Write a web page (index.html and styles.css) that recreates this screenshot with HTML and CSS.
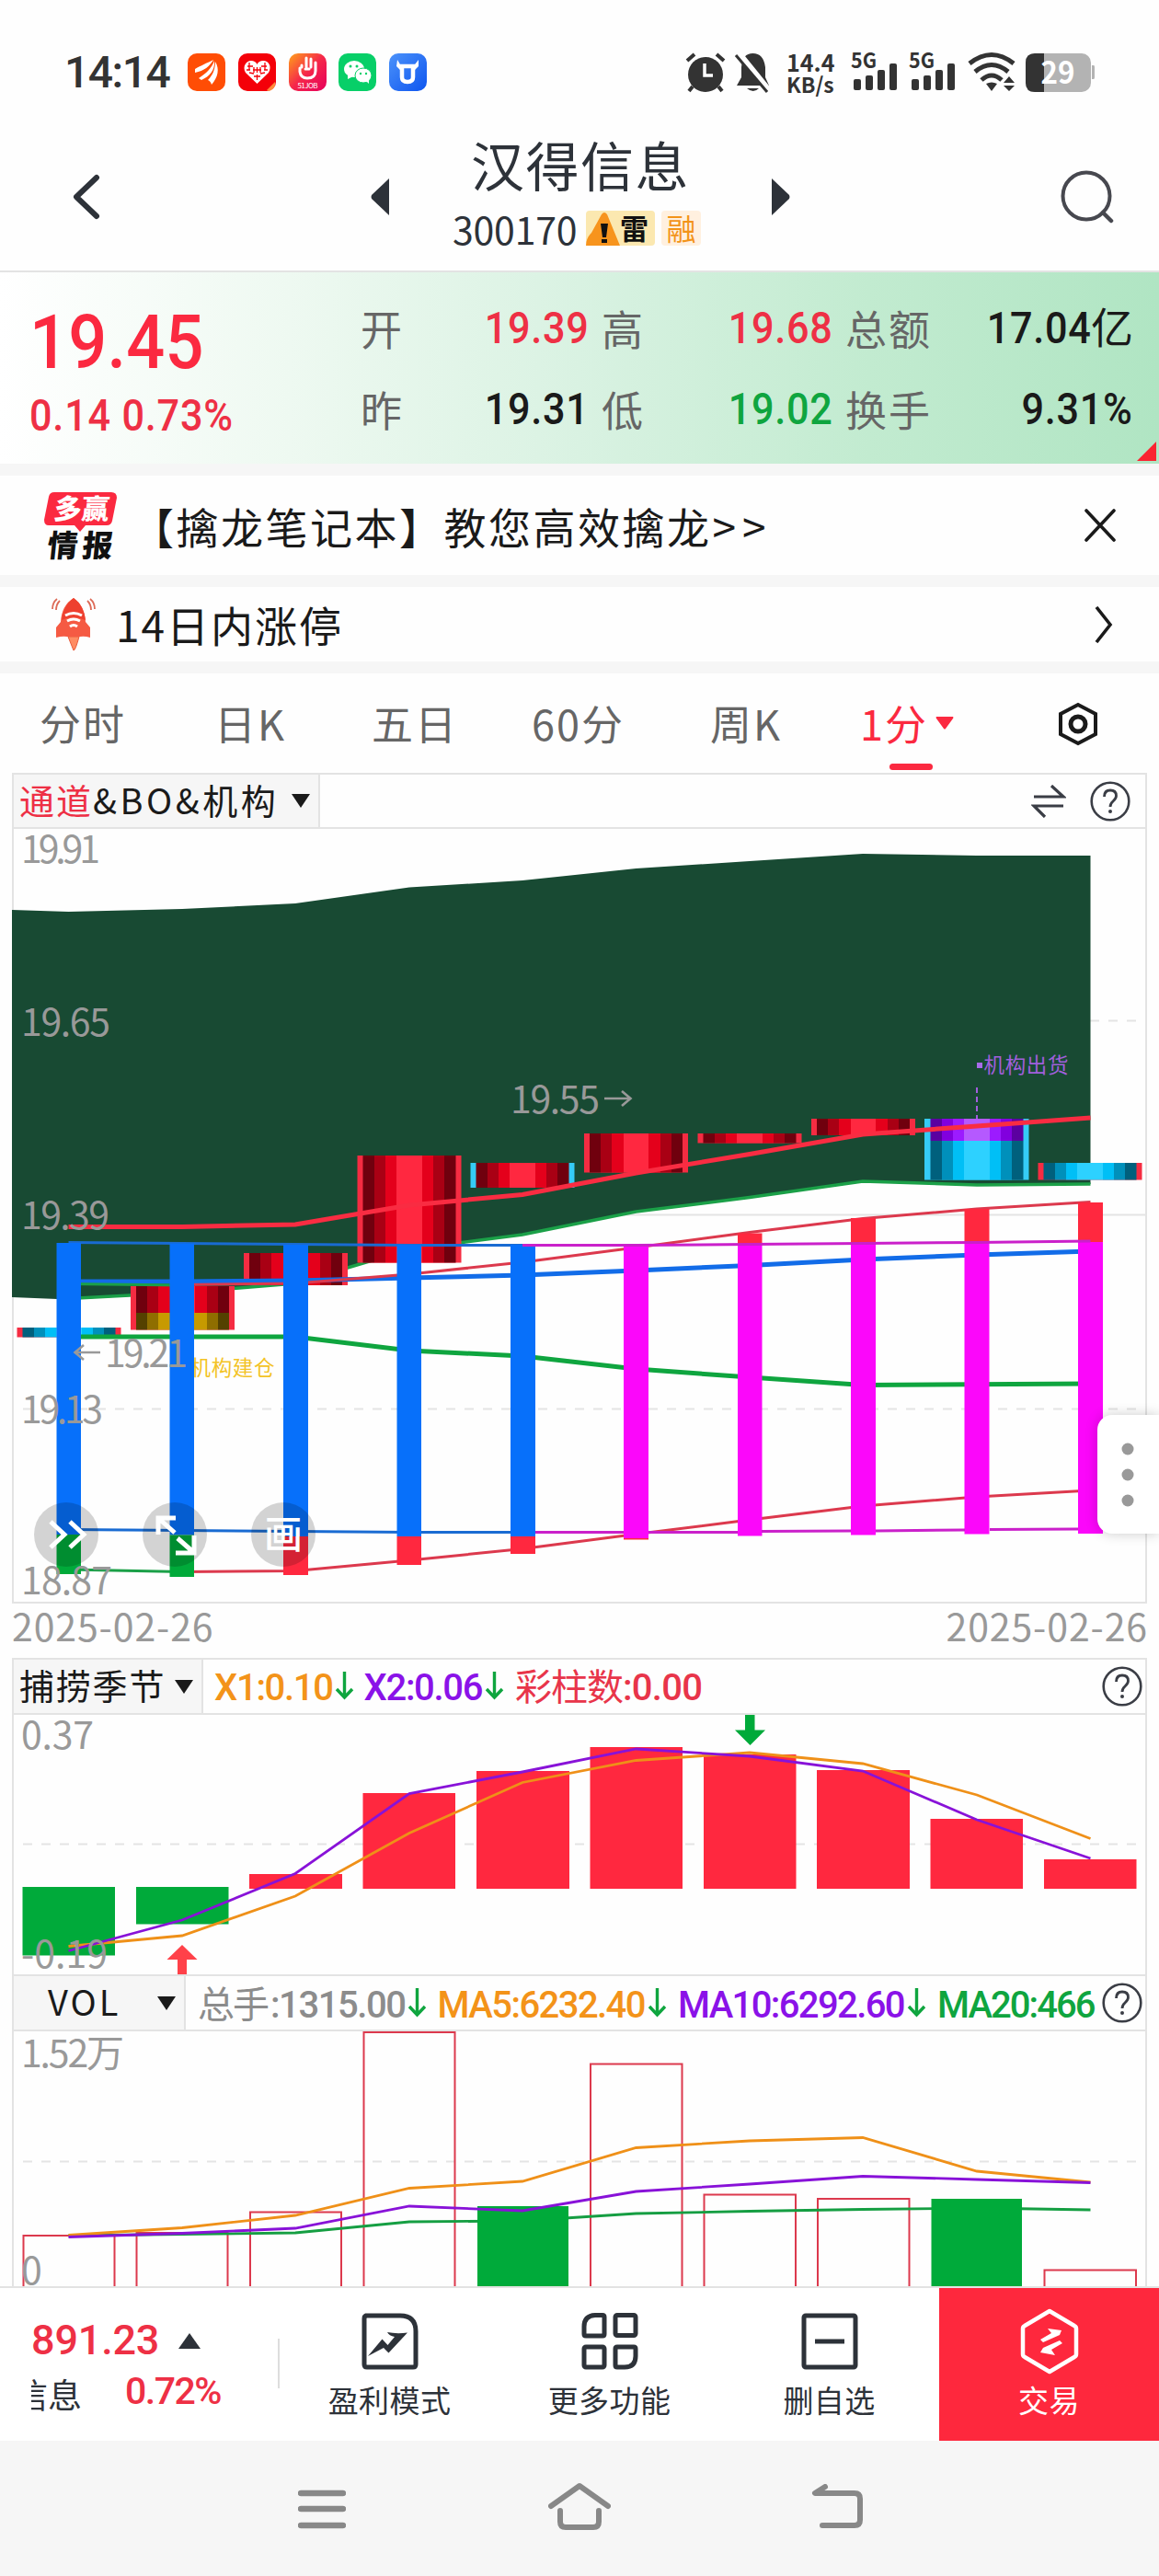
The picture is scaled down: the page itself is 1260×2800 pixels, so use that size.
FILE: index.html
```html
<!DOCTYPE html>
<html lang="zh-CN">
<head>
<meta charset="utf-8">
<title>汉得信息 300170</title>
<link rel="stylesheet" href="styles.css">
</head>
<body>
<div class="screen">

<header class="status">
  <span class="clock">14:14</span>
  <div class="apps">
    <svg viewBox="0 0 41 41"><rect width="41" height="41" rx="10" fill="#ff4d05"/><path d="M8 17C15 13 20 11 28 7c-4 7-10 12-20 14zM12 27C20 22 26 16 29 8c1 10-5 17-14 21zM26 34c-1-3-2-4-4-5 6-6 8-13 8-20 5 8 3 17-4 25z" fill="#fff"/></svg>
    <svg viewBox="0 0 41 41"><rect width="41" height="41" rx="10" fill="#f40009"/><path d="M20.500 33L8 21C4 14 9 8 14 8c3 0 5 1 6.500 4C22 9 24 8 27 8c6 0 10 6 6 13z" fill="#fff"/><path d="M10 14h6M12 10v8M25 14h6M29 10v8M16 18h9M17 15v6M20.500 15v6M24 15v6M12 21l5 1M29 21l-5 1M17 25h7M20.500 23v6M9 18h4M28 18h4" stroke="#f40009" stroke-width="1.300"/><path d="M31 40l9-9v4q-2 5-7 6z" fill="#ff8a3a"/></svg>
    <svg viewBox="0 0 41 41"><defs><linearGradient id="job" x1="0" y1="0" x2="1" y2="1"><stop offset="0" stop-color="#ffa21a"/><stop offset=".5" stop-color="#f5274a"/><stop offset="1" stop-color="#e6005c"/></linearGradient></defs><rect width="41" height="41" rx="10" fill="url(#job)"/><path d="M12 16v4q1 7 8 7 9 0 9-8V10M14 15v-2M19 15V5M24 15V6M18 17h4" fill="none" stroke="#fff" stroke-width="3" stroke-linecap="round"/><text x="20.500" y="38" text-anchor="middle" font-size="8" textLength="22" fill="#fff">51JOB</text></svg>
    <svg viewBox="0 0 41 41"><rect width="41" height="41" rx="10" fill="#07cf68"/><ellipse cx="17" cy="17" rx="11" ry="9" fill="#fff"/><path d="M10 23l0 5 6-3z" fill="#fff"/><ellipse cx="27" cy="24" rx="9" ry="8" fill="#fff" stroke="#07cf68"/><path d="M30 30l3 3v-5z" fill="#fff"/><g fill="#07cf68"><circle cx="13" cy="14" r="1.500"/><circle cx="20" cy="14" r="1.500"/><circle cx="24" cy="22" r="1.200"/><circle cx="30" cy="22" r="1.200"/></g></svg>
    <svg viewBox="0 0 41 41"><defs><linearGradient id="bull" x1="0" y1="0" x2="1" y2="1"><stop offset="0" stop-color="#4c92fa"/><stop offset="1" stop-color="#0d55ef"/></linearGradient></defs><rect width="41" height="41" rx="10" fill="url(#bull)"/><path d="M14 14h12v12q0 5-6 5t-6-5z" fill="none" stroke="#fff" stroke-width="4.500"/><path d="M12 12L9 7l-1 7 4 4zM28 12l4-5v7l-4 4z" fill="#fff"/></svg>
  </div>
  <div class="sys">
    <svg class="alarm" viewBox="0 0 44 43"><circle cx="22" cy="24" r="19" fill="#333"/><path d="M2 9l8-7M42 9l-8-7M8 37l-4 5M36 37l4 5" stroke="#333" stroke-width="4"/><path d="M21 12v13h9" fill="none" stroke="#fff" stroke-width="3.500"/></svg>
    <svg class="bell" viewBox="0 0 37 43"><path d="M1 36l5-9V16Q7 1 18.500 1T32 16v11l4 9zM12 39h13q-6 6-13 0z" fill="#333"/><path d="M3 1l34 42" stroke="#fff" stroke-width="7"/><path d="M0 3l34 40" stroke="#333" stroke-width="3"/></svg>
    <div class="rate"><span>14.4</span><span>KB/s</span></div>
    <svg class="sig" viewBox="0 0 50 43"><text x="-1" y="16.500" font-size="23" font-weight="700" textLength="28" lengthAdjust="spacingAndGlyphs" fill="#333">5G</text><g fill="#333"><rect x="2" y="29" width="8" height="12" rx="2"/><rect x="15" y="25" width="8" height="16" rx="2"/><rect x="28" y="19" width="8" height="22" rx="2"/><rect x="41" y="12" width="8" height="29" rx="2"/></g></svg>
    <svg class="sig" viewBox="0 0 50 43"><text x="-1" y="16.500" font-size="23" font-weight="700" textLength="28" lengthAdjust="spacingAndGlyphs" fill="#333">5G</text><g fill="#333"><rect x="2" y="29" width="8" height="12" rx="2"/><rect x="15" y="25" width="8" height="16" rx="2"/><rect x="28" y="19" width="8" height="22" rx="2"/><rect x="41" y="12" width="8" height="29" rx="2"/></g></svg>
    <svg class="wifi" viewBox="0 0 52 43"><path d="M2 12Q26-7 50 12M8 21Q26 6 44 21M15 30Q26 20 37 30" fill="none" stroke="#333" stroke-width="5"/><path d="M20 34q6-3 12 0l-6 8zM39 33l6-7 6 7zM39 36l6 6 6-6z" fill="#333"/></svg>
    <svg class="batt" viewBox="0 0 75 42"><rect width="71" height="42" rx="10" fill="#b3b3b3"/><path d="M72 13h2q1 0 1 2v11q0 2-1 2h-2z" fill="#b3b3b3"/><path d="M20 0H10Q0 0 0 10v22q0 10 10 10h10z" fill="#333"/><text x="35" y="33" text-anchor="middle" font-size="33" font-weight="700" textLength="37" lengthAdjust="spacingAndGlyphs" fill="#fff">29</text></svg>
  </div>
</header>

<nav class="titlebar">
  <svg class="back" viewBox="0 0 30 50"><path d="M26 4L4 25l22 21" fill="none" stroke="#2d3239" stroke-width="6" stroke-linecap="round" stroke-linejoin="round"/></svg>
  <svg class="tri" viewBox="0 0 20 40"><path d="M20 0v40L1 22q-1-2 0-4z" fill="#2d3239"/></svg>
  <div class="title">
    <h1>汉得信息</h1>
    <div class="code"><span class="num">300170</span>
      <span class="tag lei"><svg viewBox="0 0 37 38"><path d="M0 38Q0 30 6 24L17 4q3-4 6 0l14 34z" fill="#f7941d"/><path d="M16 14h8l-2 15h-4zM17 31h6v4h-6z" fill="#111"/></svg><b>雷</b></span>
      <span class="tag rong">融</span></div>
  </div>
  <svg class="tri" viewBox="0 0 20 40"><path d="M0 0v40l19-18q1-2 0-4z" fill="#2d3239"/></svg>
  <svg class="search" viewBox="0 0 58 58"><circle cx="28" cy="28" r="25.500" fill="none" stroke="#47484f" stroke-width="4"/><path d="M46 46l9 9" stroke="#47484f" stroke-width="4.500" stroke-linecap="round"/></svg>
</nav>

<section class="quote">
  <div class="price"><div class="last">19.45</div><div class="chg">0.14 0.73%</div></div>
  <dl class="stats">
    <dt>开</dt><dd class="up"><span>19.39</span></dd><dt>高</dt><dd class="up"><span>19.68</span></dd><dt>总额</dt><dd><span>17.04</span><i>亿</i></dd>
    <dt>昨</dt><dd><span>19.31</span></dd><dt>低</dt><dd class="down"><span>19.02</span></dd><dt>换手</dt><dd><span>9.31%</span></dd>
  </dl>
  <svg class="corner" viewBox="0 0 21 21"><path d="M21 0v21H0z" fill="#fa2431"/></svg>
</section>

<section class="row news">
  <svg class="badge" viewBox="0 0 80 74"><path d="M11 1h62q6 0 6 6l-5 25q-1 5-6 5H45l-6 7-6-7H5q-5 0-5-6L5 6q1-5 6-5z" fill="#fb2940"/><g font-weight="900" font-size="30" transform="skewX(-6)"><text x="13" y="30" textLength="60" fill="#fff">多赢</text><text x="10" y="71" font-size="33" textLength="71" fill="#111">情报</text></g></svg>
  <p>【擒龙笔记本】教您高效擒龙<span>&gt;&gt;</span></p>
  <svg class="x" viewBox="0 0 36 36"><path d="M3 2l30 32M33 2L3 34" stroke="#1a1a1a" stroke-width="3.600" stroke-linecap="round"/></svg>
</section>

<section class="row limit">
  <svg class="rocket" viewBox="0 0 48 60"><path d="M18 43l6 15q2 0 6-15z" fill="#ff8c63" stroke="#e85a3c"/><path d="M24 1Q11 9 10 27l-5 6v11q7-2 12-1h14q5-1 11 1V33l-5-6Q36 9 24 1z" fill="#f55a43"/><path d="M24 1Q13 9 11 25q12-6 26 0Q35 9 24 1z" fill="#ee402f"/><path d="M15 20q9-5 18 0M17 26q7-4 14 0M20 32q4-3 8 0" fill="none" stroke="#fff" stroke-width="3"/><path d="M1 13Q1 6 6 2M5 14q0-6 4-10M47 13q0-7-5-11M43 14q0-6-4-10" fill="none" stroke="#dd6b58" stroke-width="1.800"/></svg>
  <p>14日内涨停</p>
  <svg class="go" viewBox="0 0 20 40"><path d="M2 1l15 19L2 39" fill="none" stroke="#1a1a1a" stroke-width="3.600"/></svg>
</section>

<nav class="tabs">
  <span>分时</span><span>日K</span><span>五日</span><span>60分</span><span>周K</span>
  <span class="on">1分<svg viewBox="0 0 20 14"><path d="M1 0h18q1 1 0 2l-8 11q-1 1-2 0L1 2q-1-1 0-2z" fill="#fb2940"/></svg></span>
  <svg class="gear" viewBox="0 0 44 48"><path d="M22 3l19 10v22L22 45 3 35V13z" fill="none" stroke="#1a1a1a" stroke-width="4"/><circle cx="22" cy="24" r="8" fill="none" stroke="#1a1a1a" stroke-width="5"/></svg>
</nav>

<section class="panel">
  <div class="bar b-main">
    <div class="pick p-main"><span class="pk"><em>通道</em>&amp;BO&amp;机构</span><svg class="car" viewBox="0 0 20 15"><path d="M0 0h20L10 15z" fill="#1a1a1a"/></svg></div>
    <svg class="swap" viewBox="0 0 38 36"><path d="M3 13h32L22 1M35 23H3l12 12" fill="none" stroke="#3a3d45" stroke-width="3.200"/></svg>
    <svg class="help" viewBox="0 0 44 44"><circle cx="22" cy="22" r="20.300" fill="none" stroke="#3a3d45" stroke-width="2.600"/><path d="M15.500 17q0-7 6.500-7t6.500 6q0 3-3.500 6-3 2.500-3 6" fill="none" stroke="#3a3d45" stroke-width="2.800"/><circle cx="22" cy="33" r="2" fill="#3a3d45"/></svg>
  </div>
  <svg class="k" viewBox="13 901 1234 840">
    <defs>
      <linearGradient id="cr"><stop offset=".12" stop-color="#70000e"/><stop offset=".12" stop-color="#a90014"/><stop offset=".24" stop-color="#a90014"/><stop offset=".24" stop-color="#e4001b"/><stop offset=".365" stop-color="#e4001b"/><stop offset=".365" stop-color="#ff2840"/><stop offset=".635" stop-color="#ff2840"/><stop offset=".635" stop-color="#e4001b"/><stop offset=".76" stop-color="#e4001b"/><stop offset=".76" stop-color="#a90014"/><stop offset=".88" stop-color="#a90014"/><stop offset=".88" stop-color="#70000e"/></linearGradient>
      <linearGradient id="cb"><stop offset=".12" stop-color="#00607d"/><stop offset=".12" stop-color="#0090bb"/><stop offset=".24" stop-color="#0090bb"/><stop offset=".24" stop-color="#00bff6"/><stop offset=".365" stop-color="#00bff6"/><stop offset=".365" stop-color="#2dd1ff"/><stop offset=".635" stop-color="#2dd1ff"/><stop offset=".635" stop-color="#00bff6"/><stop offset=".76" stop-color="#00bff6"/><stop offset=".76" stop-color="#0090bb"/><stop offset=".88" stop-color="#0090bb"/><stop offset=".88" stop-color="#00607d"/></linearGradient>
      <linearGradient id="cp"><stop offset=".12" stop-color="#5b00a0"/><stop offset=".12" stop-color="#8100de"/><stop offset=".24" stop-color="#8100de"/><stop offset=".24" stop-color="#9c1bff"/><stop offset=".365" stop-color="#9c1bff"/><stop offset=".365" stop-color="#b559ff"/><stop offset=".635" stop-color="#b559ff"/><stop offset=".635" stop-color="#9c1bff"/><stop offset=".76" stop-color="#9c1bff"/><stop offset=".76" stop-color="#8100de"/><stop offset=".88" stop-color="#8100de"/><stop offset=".88" stop-color="#5b00a0"/></linearGradient>
      <linearGradient id="cg"><stop offset=".12" stop-color="#544100"/><stop offset=".12" stop-color="#8f6e00"/><stop offset=".24" stop-color="#8f6e00"/><stop offset=".24" stop-color="#c79a00"/><stop offset=".76" stop-color="#c79a00"/><stop offset=".76" stop-color="#8f6e00"/><stop offset=".88" stop-color="#8f6e00"/><stop offset=".88" stop-color="#544100"/></linearGradient>
    </defs>
    <g stroke="#e4e4e4" stroke-width="2"><path d="M25 1109.600H1246M25 1531.400H1246" stroke-dasharray="10 10"/><path d="M13 1320.500H1246"/></g>
    <path d="M13 989L74.500 991 198 988 321 982 445 964.500 568 957 691.500 944 815 936 938 928 1062 930H1185.500V1287L1062 1288 938 1284 815 1302 691.500 1317 568 1342 445 1357 321 1395 198 1406 74.500 1412.500 13 1410z" fill="#184a33"/>
    <path d="M74.500 1411.500L198 1405 321 1395 445 1358 568 1342 691.500 1317 815 1301.500 938 1284 1062 1288 1185.500 1287" fill="none" stroke="#1ba048" stroke-width="3.500"/>
    <g fill="#f52c42">
      <rect x="18.500" y="1443" width="113" height="10.500"/><rect x="142" y="1398" width="113" height="47.500"/><rect x="265" y="1362" width="113" height="35"/><rect x="388.500" y="1256" width="113" height="116.500"/><rect x="635" y="1232" width="113" height="42.500"/><rect x="758.500" y="1232" width="113" height="10.500"/><rect x="882" y="1216" width="113" height="18"/><rect x="1128.500" y="1264" width="113" height="18.500"/>
    </g>
    <g fill="#35ccf7"><rect x="511.500" y="1264" width="113" height="27"/><rect x="1005" y="1216" width="113.500" height="66.500"/></g>
    <g fill="url(#cr)"><rect x="148" y="1398" width="101" height="30"/><rect x="271" y="1362" width="101" height="35"/><rect x="394.500" y="1256" width="101" height="116.500"/><rect x="517.500" y="1264" width="101" height="27"/><rect x="641" y="1232" width="101" height="42.500"/><rect x="764.500" y="1232" width="101" height="10.500"/><rect x="888" y="1216" width="101" height="18"/></g>
    <g fill="url(#cb)"><rect x="24.500" y="1443" width="101" height="10.500"/><rect x="1011.500" y="1240" width="101" height="42.500"/><rect x="1134.500" y="1264" width="101" height="18.500"/></g>
    <rect x="148" y="1427" width="101" height="18.500" fill="url(#cg)"/>
    <rect x="1011.500" y="1216" width="101" height="24" fill="url(#cp)"/>
    <g fill="none">
      <path d="M74.500 1333.500H198L321 1331 445 1310 568 1298.500 691.500 1275 815 1254.500 938 1233 1062 1224 1185.500 1215" stroke="#f92c42" stroke-width="5"/>
      <path d="M74.500 1453H321L445 1468 568 1474 691.500 1488 815 1497 938 1505.500 1185.500 1504" stroke="#0fa53f" stroke-width="5"/>
      <path d="M74.500 1393H198L321 1392 445 1389 568 1386 691.500 1381 815 1375.500 938 1369 1062 1364 1185.500 1360" stroke="#126ce8" stroke-width="5"/>
      <path d="M74.500 1395.500L198 1397M74.500 1706L198 1708.500" stroke="#1ba048" stroke-width="3"/>
      <path d="M198 1396.500L321 1395 445 1385 568 1372 691.500 1356 815 1339.500 938 1324.500 1062 1314 1185.500 1306.500M198 1708.500L321 1707.500 445 1696 568 1683.500 691.500 1667.500 815 1652 938 1637 1062 1627 1185.500 1620" stroke="#dc394d" stroke-width="3"/>
      <path d="M74.500 1350.500L198 1351.500 321 1352.500 445 1353.500H568M74.500 1662.500L198 1663.500 321 1664.500 445 1665.500H568" stroke="#196bd2" stroke-width="3"/>
    </g>
    <text x="206.500" y="1495" font-size="22.500" textLength="92" fill="#f3c326">机构建仓</text>
    <g fill="#0770fa"><rect x="61.500" y="1351" width="26.500" height="317"/><rect x="184.500" y="1351.500" width="26.500" height="317"/><rect x="308" y="1353" width="27" height="317"/><rect x="431.500" y="1353" width="26.500" height="317"/><rect x="555" y="1353" width="27" height="317"/></g>
    <g fill="#00aa3a"><rect x="61.500" y="1668" width="26.500" height="43"/><rect x="184.500" y="1668.500" width="26.500" height="45.500"/></g>
    <g fill="#ff283f"><rect x="308" y="1670" width="27" height="42"/><rect x="431.500" y="1670" width="26.500" height="31"/><rect x="555" y="1670" width="27" height="19"/><rect x="678" y="1671" width="27" height="2.500"/><rect x="802" y="1340.500" width="26.500" height="12"/><rect x="925" y="1324" width="27" height="27"/><rect x="1048.500" y="1314" width="27" height="36"/><rect x="1172" y="1307" width="27" height="43"/></g>
    <g fill="#fb07fa"><rect x="678" y="1353.500" width="27" height="318.500"/><rect x="802" y="1352" width="26.500" height="317.500"/><rect x="925" y="1351" width="27" height="317.500"/><rect x="1048.500" y="1350" width="27" height="317.500"/><rect x="1172" y="1350" width="27" height="317"/></g>
    <path d="M568 1353.500H691.500L815 1352.500 938 1351.500 1062 1350.500 1185.500 1349M582 1665.500H678M705 1665.500H802M828 1664.500L925 1664M952 1664L1049 1663M1076 1662.500L1172 1662" fill="none" stroke="#ca20ca" stroke-width="3"/>
    <path d="M1062 1182v34" stroke="#a35ee0" stroke-width="2" stroke-dasharray="6 4"/>
    <rect x="1062" y="1155" width="6" height="6" fill="#a86bea"/>
    <text x="1069.500" y="1165.500" font-size="22.500" textLength="92" fill="#a05fdc">机构出货</text>
    <g class="lab">
      <text x="23" y="938" textLength="86">19.91</text><text x="23" y="1126" textLength="97">19.65</text><text x="23" y="1336" textLength="96">19.39</text><text x="23" y="1547" textLength="89">19.13</text><text x="23" y="1733" textLength="99">18.87</text>
      <text x="555" y="1209.500" textLength="97">19.55</text><text x="114" y="1486" textLength="90">19.21</text>
    </g>
    <path d="M657 1194h28M676 1186l9.500 8-9.500 8M109 1470H82M91 1462l-9.500 8 9.500 8" fill="none" stroke="#999" stroke-width="2.600"/>
  </svg>
  <div class="tools">
    <svg viewBox="0 0 70 70"><path d="M18 21l15 14-15 14M39 21l15 14-15 14" fill="none" stroke="#fff" stroke-width="5"/></svg>
    <svg viewBox="0 0 70 70"><path d="M17 35V17h19M18 18l17 15M38 39l16 14M56 36v19H36" fill="none" stroke="#fff" stroke-width="5"/></svg>
    <svg viewBox="0 0 70 70"><text x="35" y="50" text-anchor="middle" font-size="42" font-weight="500" fill="#fff">画</text></svg>
  </div>
  <svg class="handle" viewBox="0 0 67 129"><g fill="#999"><circle cx="33" cy="37" r="6.500"/><circle cx="33" cy="65" r="6.500"/><circle cx="33" cy="93" r="6.500"/></g></svg>
</section>
<div class="dates"><span>2025-02-26</span><span>2025-02-26</span></div>

<section class="panel sub">
  <div class="bar b-sub">
    <div class="pick p-sub"><span class="pk">捕捞季节</span><svg class="car" viewBox="0 0 20 15"><path d="M0 0h20L10 15z" fill="#1a1a1a"/></svg></div>
    <svg class="vals" viewBox="221 1804 960 58"><g class="v">
      <text x="233" y="1847.500" textLength="130" fill="#f39319">X1:0.10</text><text x="395.500" y="1847.500" textLength="130" fill="#8a12e8">X2:0.06</text>
      <text x="560" y="1847.500" textLength="118" fill="#e8354a" font-weight="400">彩柱数</text><text x="677" y="1847.500" textLength="87" fill="#e8354a">:0.00</text></g>
      <path d="M374.500 1817v27M366 1836l8.500 9 8.500-9M537.500 1817v27M529 1836l8.500 9 8.500-9" fill="none" stroke="#0fa53f" stroke-width="3.400"/></svg>
    <svg class="help" viewBox="0 0 44 44"><circle cx="22" cy="22" r="20.300" fill="none" stroke="#3a3d45" stroke-width="2.600"/><path d="M15.500 17q0-7 6.500-7t6.500 6q0 3-3.500 6-3 2.500-3 6" fill="none" stroke="#3a3d45" stroke-width="2.800"/><circle cx="22" cy="33" r="2" fill="#3a3d45"/></svg>
  </div>
  <svg class="c1" viewBox="13 1864 1234 282">
    <path d="M25 2004.500H1246" stroke="#e4e4e4" stroke-width="2" stroke-dasharray="10 10"/>
    <g fill="#00aa3a"><rect x="24.500" y="2051" width="100.500" height="74.500"/><rect x="148" y="2051" width="100.500" height="40.500"/></g>
    <g fill="#ff283f"><rect x="271" y="2037" width="101" height="16"/><rect x="394.500" y="1949" width="100.500" height="104"/><rect x="518" y="1925" width="101" height="128"/><rect x="641.500" y="1899" width="100.500" height="154"/><rect x="765" y="1907" width="100.500" height="146"/><rect x="888" y="1924" width="101" height="129"/><rect x="1011.500" y="1977" width="100.500" height="76"/><rect x="1135" y="2021" width="100.500" height="32"/></g>
    <g fill="none" stroke-width="2.800"><path d="M74.500 2115.500L198 2104 321 2061 445 1992.500 568 1937.500 691.500 1913.500 815 1905 938 1917 1062 1951 1185.500 1998.500" stroke="#ef9018"/><path d="M74.500 2120.500L198 2087 321 2036.500 445 1949.500 568 1926 691.500 1901 815 1909 938 1925 1062 1978 1185.500 2020" stroke="#8812d8"/></g>
    <path d="M198 2114l16.500 16H203v18h-10v-18h-11.500z" fill="#ff4149"/><path d="M815.500 1897l-16.500-16.500h11V1863h10.500v17.500h11.500z" fill="#00aa3a"/>
    <g class="lab"><text x="23" y="1901" textLength="79">0.37</text><text x="23" y="2139" textLength="94">-0.19</text></g>
  </svg>
  <div class="bar b-vol">
    <div class="pick p-vol"><span class="pk">VOL</span><svg class="car" viewBox="0 0 20 15"><path d="M0 0h20L10 15z" fill="#1a1a1a"/></svg></div>
    <svg class="vals" viewBox="202 2148 990 58"><g class="v">
      <text x="215" y="2193" textLength="78" fill="#8c8c8c" font-weight="400">总手</text><text x="294" y="2193" textLength="148" fill="#8c8c8c">:1315.00</text><text x="475.500" y="2193" textLength="227" fill="#f39319">MA5:6232.40</text><text x="737" y="2193" textLength="247.500" fill="#8a12e8">MA10:6292.60</text><text x="1019" y="2193" textLength="172.500" fill="#0fa53f">MA20:466</text></g>
      <path d="M453.500 2161v28M445 2181l8.500 9 8.500-9M714.500 2161v28M706 2181l8.500 9 8.500-9M996.500 2161v28M988 2181l8.500 9 8.500-9" fill="none" stroke="#0fa53f" stroke-width="3.400"/></svg>
    <svg class="help" viewBox="0 0 44 44"><circle cx="22" cy="22" r="20.300" fill="none" stroke="#3a3d45" stroke-width="2.600"/><path d="M15.500 17q0-7 6.500-7t6.500 6q0 3-3.500 6-3 2.500-3 6" fill="none" stroke="#3a3d45" stroke-width="2.800"/><circle cx="22" cy="33" r="2" fill="#3a3d45"/></svg>
  </div>
  <svg class="c2" viewBox="13 2208 1234 277">
    <path d="M25 2349.500H1246" stroke="#e4e4e4" stroke-width="2" stroke-dasharray="10 10"/>
    <g fill="none" stroke="#dc394d" stroke-width="2"><path d="M25.500 2490V2430H124.500V2490M148.500 2490V2427H247.500V2490M272 2490V2404.500H371V2490M395.500 2490V2209H494.500V2490M642 2490V2243.500H741.500V2490M765.500 2490V2385.500H865V2490M889 2490V2390H988.500V2490M1135.500 2490V2467.500H1235V2490"/></g>
    <path d="M74.500 2430L198 2428.500 321 2427 445 2415 568 2414 691.500 2406 815 2403.500 938 2401.500 1062 2400 1185.500 2402" fill="none" stroke="#159e42" stroke-width="2.800"/>
    <g fill="#00aa3a"><rect x="519" y="2398" width="99" height="90"/><rect x="1012.500" y="2390" width="98.500" height="96"/></g>
    <g fill="none" stroke-width="2.800"><path d="M74.500 2429.500L198 2421.500 321 2408 445 2378.500 568 2371 691.500 2334.500 815 2327 938 2323.500 1062 2360 1185.500 2372" stroke="#ef9018"/><path d="M74.500 2431.500L198 2427.500 321 2422 445 2398 568 2403 691.500 2382 815 2374 938 2365.500 1062 2369 1185.500 2372.500" stroke="#8812d8"/></g>
    <g class="lab"><text x="23" y="2247" textLength="112">1.52万</text><text x="23" y="2483">0</text></g>
  </svg>
</section>

<footer class="dock">
  <div class="index">
    <div class="l1"><span>891.23</span><svg viewBox="0 0 24 17"><path d="M12 0l12 17H0z" fill="#2d3239"/></svg></div>
    <div class="l2"><div class="clip"><span>信息</span></div><b>0.72%</b></div>
  </div>
  <div class="item"><svg viewBox="0 0 62 62"><path d="M4 3h38q17 0 17 17v36q0 3-3 3H6q-3 0-3-3V6q0-3 3-3z" fill="none" stroke="#2d3239" stroke-width="5"/><path d="M7 47L22.500 28.500 28.500 35 36 26Q30 25 28 21 38 23 50 21.500L29.500 43.500 24 38z" fill="#2d3239"/></svg><span>盈利模式</span></div>
  <div class="item"><svg viewBox="0 0 62 62"><g fill="none" stroke="#2d3239" stroke-width="5"><path d="M15 2.500h8q2 0 2 2V23q0 2-2 2H5q-2 0-2-2v-8Q3 3 15 2.500z"/><rect x="37" y="2.500" width="22" height="22" rx="2"/><rect x="3" y="37" width="22" height="22" rx="2"/><path d="M39 37h18q2 0 2 2v8q0 12-12 12h-8q-2 0-2-2V39q0-2 2-2z"/></g></svg><span>更多功能</span></div>
  <div class="item"><svg viewBox="0 0 62 62"><rect x="3" y="3" width="56" height="56" rx="2" fill="none" stroke="#2d3239" stroke-width="5"/><path d="M15 31h32" stroke="#2d3239" stroke-width="5"/></svg><span>删自选</span></div>
  <div class="item trade"><svg class="hex" viewBox="0 0 64 72"><path d="M32 3l27 16q2 1 2 3v28q0 2-2 3L32 69 5 53q-2-1-2-3V22q0-2 2-3z" fill="none" stroke="#fff" stroke-width="4.500" stroke-linejoin="round"/><path d="M22 34L34 27 30 22 45 24 43 29 25 37zM46 38L34 45 38 51 22 48 25 43 43 35z" fill="#fff"/></svg><span>交易</span></div>
</footer>

<nav class="sysnav">
  <svg class="n1" viewBox="0 0 52 44"><path d="M3 5h46M3 22h46M3 40h46" stroke="#888" stroke-width="6.500" stroke-linecap="round"/></svg>
  <svg class="n2" viewBox="0 0 68 52"><path d="M3 26L34 4l31 22M13 31v12q0 6 6 6h30q6 0 6-6V31" fill="none" stroke="#888" stroke-width="6" stroke-linecap="round" stroke-linejoin="round"/></svg>
  <svg class="n3" viewBox="0 0 56 50"><path d="M15 3L4 10h43q6 0 6 6v23q0 6-6 6H12" fill="none" stroke="#888" stroke-width="6" stroke-linecap="round" stroke-linejoin="round"/></svg>
</nav>
</div>
</body>
</html>
```
FILE: styles.css
```css
* { box-sizing: border-box; margin: 0; padding: 0; }
body { background: #fff; font-family: "Noto Sans CJK SC", "Noto Sans", sans-serif; color: #1a1a1a; }
svg { display: block; flex: none; }
.screen { width: 1260px; height: 2800px; overflow: hidden; display: flex; flex-direction: column; background: #fefefe; }
.screen > * { flex: none; }

.status { height: 130px; padding: 27px 70px 0 70px; display: flex; align-items: center; color: #333; }
.status svg { overflow: visible; }
.clock { font: 500 48px/48px Roboto, sans-serif; width: 134px; letter-spacing: -1.500px; white-space: nowrap; }
.apps { display: flex; gap: 13.800px; }
.apps svg { width: 41px; height: 41px; }
.sys { margin-left: auto; display: flex; align-items: center; height: 43px; }
.alarm { width: 44px; height: 43px; margin-right: 11px; }
.bell { width: 37px; height: 43px; margin-right: 18px; }
.rate { display: flex; flex-direction: column; width: 71px; font-weight: 700; font-size: 25px; line-height: 24px; white-space: nowrap; }
.rate span:last-child { font-size: 23px; }
.sig { width: 50px; height: 43px; margin-right: 13px; }
.wifi { width: 52px; height: 43px; margin-right: 11px; }
.batt { width: 75px; height: 42px; }

.titlebar { height: 166px; border-bottom: 2px solid #e3e3e3; display: flex; align-items: center; padding: 0 49px 0 79px; }
.back { width: 30px; height: 50px; margin: 4px 294px 0 0; }
.tri { width: 20px; height: 40px; margin-top: 4px; }
.title { width: 416px; display: flex; flex-direction: column; align-items: center; }
.title h1 { font-weight: 400; font-size: 58px; line-height: 72px; height: 80px; margin-top: -8px; letter-spacing: 1.500px; color: #2d3239; }
.code { display: flex; align-items: center; height: 52px; color: #2d3239; margin-left: -8px; }
.num { font-size: 41px; line-height: 52px; letter-spacing: -.2px; width: 145px; white-space: nowrap; }
.tag { height: 38px; line-height: 36px; border-radius: 4px; }
.lei { width: 75px; background: #fbe8b0; display: flex; margin-right: 7px; }
.lei svg { width: 37px; height: 38px; }
.lei b { font-size: 31px; color: #111; }
.rong { width: 43px; background: #fff0df; color: #f39319; font-size: 32px; text-align: center; }
.search { width: 58px; height: 58px; margin: 4px 0 0 auto; }

.quote { position: relative; height: 208px; display: flex; background: linear-gradient(90deg, #fff 0, #eef9f1 25%, #d9f2e2 50%, #c2ebd0 75%, #b0e5c3 100%); }
.price { width: 392px; padding: 30px 0 0 32px; color: #fb2940; font-family: Roboto, sans-serif; font-weight: 500; white-space: nowrap; }
.last { font-size: 82px; line-height: 92px; transform: scaleX(.9); transform-origin: left; letter-spacing: .3px; }
.chg { font-size: 48px; line-height: 56px; letter-spacing: .9px; margin-top: 6px; color: #ee3045; transform: scaleX(.9); transform-origin: left; }
.stats { display: grid; grid-template-columns: 45px 203px 62px 203px 108px 219px; grid-template-rows: 88px 88px; margin-top: 17px; }
.stats dt { font-size: 45px; line-height: 88px; color: #666; letter-spacing: 2px; white-space: nowrap; padding-left: 0; }
.stats dt:nth-of-type(3n+2), .stats dt:nth-of-type(3n) { padding-left: 14px; }
.stats dd { font: 500 48px/88px Roboto, "Noto Sans CJK SC", sans-serif; text-align: right; white-space: nowrap; }
.stats dd span { display: inline-block; transform: scaleX(.9); transform-origin: right; letter-spacing: .8px; }
.stats dd i { font: 400 46px/60px "Noto Sans CJK SC", sans-serif; }
.stats .up { color: #ee3045; }
.stats .down { color: #0fa53f; }
.corner { position: absolute; right: 3px; bottom: 3px; width: 21px; height: 21px; }

.row { border-top: 13px solid #f6f6f6; display: flex; align-items: center; font-size: 46px; white-space: nowrap; }
.news { height: 121px; padding: 0 46px 0 48px; }
.badge { width: 80px; height: 74px; margin-right: 15px; overflow: visible; }
.news p { letter-spacing: 2.500px; }
.news p span { letter-spacing: 7px; margin-left: 1px; }
.row .x { width: 36px; height: 36px; margin-left: auto; }
.limit { height: 107px; padding: 0 50px 0 56px; border-bottom: 13px solid #f6f6f6; }
.rocket { width: 48px; height: 60px; margin-right: 22px; }
.limit p { letter-spacing: 2px; margin-top: -2px; }
.go { width: 20px; height: 40px; margin-left: auto; }

.tabs { height: 108px; display: grid; grid-template-columns: 190px 171px 174px 194px 163px 215px 44px; padding: 0 0 0 43px; color: #666; font-size: 45px; line-height: 108px; letter-spacing: 2px; white-space: nowrap; }
.on { position: relative; color: #fb2940; display: flex; align-items: center; gap: 8px; }
.on svg { width: 20px; height: 14px; }
.on::after { content: ""; position: absolute; left: 32px; bottom: 3px; width: 47px; height: 7px; border-radius: 4px; background: #fb2940; }
.gear { width: 44px; height: 48px; margin-top: 31px; }

.panel { position: relative; width: 1234px; margin-left: 13px; border: 2px solid #e3e3e3; height: 903px; }
.panel .k, .panel .c1, .panel .c2 { margin-left: -2px; width: 1234px; }
.bar { display: flex; align-items: center; border-bottom: 2px solid #e3e3e3; }
.pick { background: #f6f6f6; border-right: 2px solid #e3e3e3; height: 100%; display: flex; align-items: center; justify-content: space-between; font-size: 38px; line-height: 1; white-space: nowrap; }
.pick em { font-style: normal; color: #ee3045; letter-spacing: 2px; }
.pk { margin-top: -4px; }
.car { width: 20px; height: 15px; }
.help { width: 44px; height: 44px; }
.b-main { height: 59px; }
.p-main { width: 333px; padding: 0 9px 0 6px; }
.p-main .pk { letter-spacing: 3.600px; }
.swap { width: 38px; height: 36px; margin: 0 26px 0 auto; }
.b-main .help { margin-right: 16px; }
.k { height: 840px; }
.dates { height: 59px; display: flex; justify-content: space-between; padding: 0 12px 0 13px; font-size: 41px; line-height: 46px; letter-spacing: .9px; color: #999; }
.lab { fill: #999; font-size: 41px; }
.tools { position: absolute; left: 22px; bottom: 38px; display: flex; gap: 48px; }
.tools svg { width: 70px; height: 70px; border-radius: 50%; background: rgba(0,0,0,.17); }
.handle { position: absolute; left: 1178px; top: 696px; width: 67px; height: 129px; background: #fff; border-radius: 16px 0 0 16px; box-shadow: 0 0 14px rgba(0,0,0,.2); }

.sub { height: 683px; border-bottom: 0; }
.b-sub { height: 60px; }
.p-sub { width: 206px; padding: 0 9px 0 6px; }
.p-sub .pk { letter-spacing: 1.800px; }
.p-vol { width: 187px; padding: 0 9px 0 37px; }
.p-vol .pk { letter-spacing: 3px; }
.b-vol { height: 62px; border-top: 2px solid #e3e3e3; }
.b-sub .vals { width: 960px; height: 58px; }
.b-vol .vals { width: 990px; height: 58px; }
.bar .vals + .help { margin-left: auto; margin-right: 3px; }
.v { font-family: Roboto, "Noto Sans CJK SC", sans-serif; font-weight: 500; font-size: 40px; }
.c1 { height: 282px; }
.c2 { height: 277px; }

.dock { height: 168px; border-top: 2px solid #e3e3e3; display: flex; background: #fff; color: #2d3239; position: relative; }
.index { position: relative; width: 304px; padding: 30px 0 0 34px; font-family: Roboto, sans-serif; font-weight: 500; color: #ee3045; white-space: nowrap; }
.index::after { content: ""; position: absolute; right: 0; top: 55px; width: 2px; height: 54px; background: #ddd; }
.l1 { display: flex; align-items: center; gap: 21px; font-size: 45px; line-height: 54px; letter-spacing: -.2px; }
.l1 svg { width: 24px; height: 17px; }
.l2 { display: flex; align-items: center; height: 56px; font-size: 41px; }
.l2 b { font-weight: 500; margin-left: 47px; letter-spacing: -1.500px; }
.clip { width: 55px; overflow: hidden; display: flex; justify-content: flex-end; font: 400 37px/50px "Noto Sans CJK SC", sans-serif; color: #2d3239; margin-top: 6px; }
.item { width: 239px; display: flex; flex-direction: column; align-items: center; padding-top: 27px; font-size: 33px; line-height: 46px; letter-spacing: .4px; }
.item svg { width: 62px; height: 62px; }
.item span { margin-top: 9px; }
.trade { background: #fe283d; color: #fff; width: 239px; padding-top: 22px; }
.item .hex { width: 64px; height: 72px; }
.trade span { margin-top: 4px; }

.sysnav { height: 149px; background: #f6f6f6; display: flex; padding-left: 324px; }
.n1 { width: 52px; height: 44px; margin: 52px 220px 0 0; }
.n2 { width: 68px; height: 52px; margin: 45px 218px 0 0; }
.n3 { width: 56px; height: 50px; margin-top: 47px; }
```
